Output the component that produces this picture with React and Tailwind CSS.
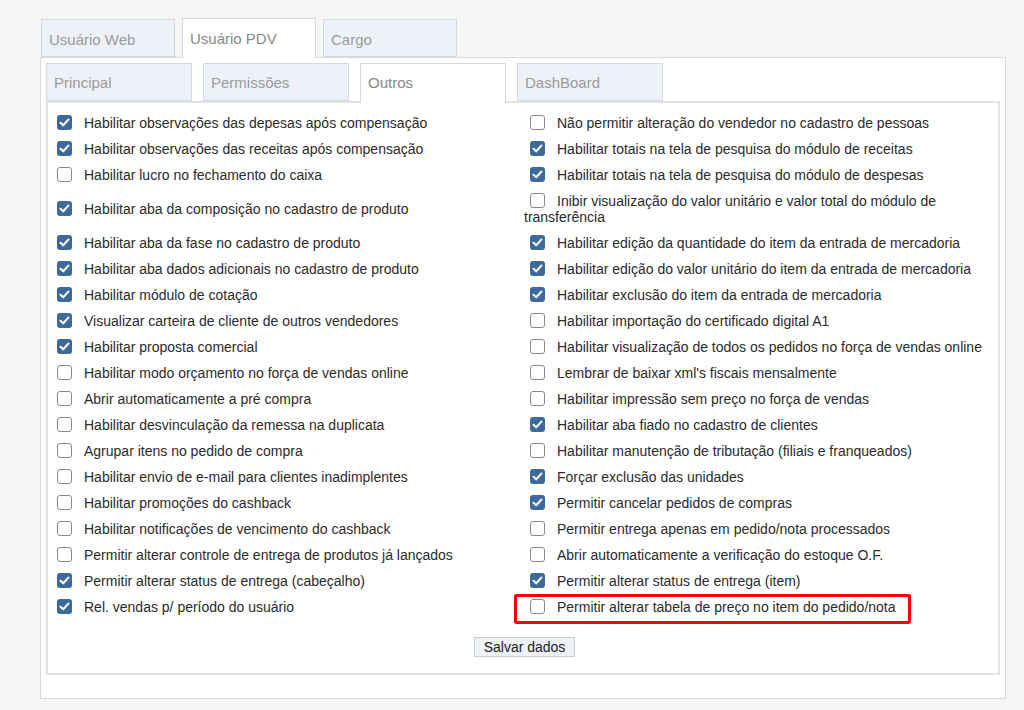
import React from "react";

const topTabs = ["Usuário Web", "Usuário PDV", "Cargo"];
const subTabs = ["Principal", "Permissões", "Outros", "DashBoard"];

const leftItems = [
  [true, "Habilitar observações das depesas após compensação"],
  [true, "Habilitar observações das receitas após compensação"],
  [false, "Habilitar lucro no fechamento do caixa"],
  [true, "Habilitar aba da composição no cadastro de produto"],
  [true, "Habilitar aba da fase no cadastro de produto"],
  [true, "Habilitar aba dados adicionais no cadastro de produto"],
  [true, "Habilitar módulo de cotação"],
  [true, "Visualizar carteira de cliente de outros vendedores"],
  [true, "Habilitar proposta comercial"],
  [false, "Habilitar modo orçamento no força de vendas online"],
  [false, "Abrir automaticamente a pré compra"],
  [false, "Habilitar desvinculação da remessa na duplicata"],
  [false, "Agrupar itens no pedido de compra"],
  [false, "Habilitar envio de e-mail para clientes inadimplentes"],
  [false, "Habilitar promoções do cashback"],
  [false, "Habilitar notificações de vencimento do cashback"],
  [false, "Permitir alterar controle de entrega de produtos já lançados"],
  [true, "Permitir alterar status de entrega (cabeçalho)"],
  [true, "Rel. vendas p/ período do usuário"],
];

const rightItems = [
  [false, "Não permitir alteração do vendedor no cadastro de pessoas"],
  [true, "Habilitar totais na tela de pesquisa do módulo de receitas"],
  [true, "Habilitar totais na tela de pesquisa do módulo de despesas"],
  [false, "Inibir visualização do valor unitário e valor total do módulo de transferência"],
  [true, "Habilitar edição da quantidade do item da entrada de mercadoria"],
  [true, "Habilitar edição do valor unitário do item da entrada de mercadoria"],
  [true, "Habilitar exclusão do item da entrada de mercadoria"],
  [false, "Habilitar importação do certificado digital A1"],
  [false, "Habilitar visualização de todos os pedidos no força de vendas online"],
  [false, "Lembrar de baixar xml's fiscais mensalmente"],
  [false, "Habilitar impressão sem preço no força de vendas"],
  [true, "Habilitar aba fiado no cadastro de clientes"],
  [false, "Habilitar manutenção de tributação (filiais e franqueados)"],
  [true, "Forçar exclusão das unidades"],
  [true, "Permitir cancelar pedidos de compras"],
  [false, "Permitir entrega apenas em pedido/nota processados"],
  [false, "Abrir automaticamente a verificação do estoque O.F."],
  [true, "Permitir alterar status de entrega (item)"],
  [false, "Permitir alterar tabela de preço no item do pedido/nota"],
];

const Box = ({ on }) =>
  on ? (
    <span className="inline-flex items-center justify-center w-[15px] h-[15px] rounded-[3px] bg-[#3d6a9c] align-[-2px] ml-[6px] mr-[12px]">
      <svg viewBox="0 0 15 15" className="w-[15px] h-[15px]">
        <path d="M3.5 7.8 L6.2 10.3 L11.4 4.6" stroke="white" strokeWidth="2.1" fill="none" strokeLinecap="round" strokeLinejoin="round" />
      </svg>
    </span>
  ) : (
    <span className="inline-block w-[15px] h-[15px] rounded-[3px] border-[1.5px] border-[#8a8a8a] bg-white align-[-2px] ml-[6px] mr-[12px]" />
  );

const Cell = ({ item, marked }) => (
  <div className="relative py-[5px] leading-4">
    {marked && (
      <span className="absolute left-[-10px] top-0 w-[397px] h-[30px] border-[3px] border-[#ff0000] rounded-[2px]" />
    )}
    <Box on={item[0]} />
    {item[1]}
  </div>
);

const Tab = ({ label, active, wide }) => (
  <div
    className={
      (wide ? "w-[146px] pt-[10px] " : "w-[134px] pt-[11px] ") +
      (active
        ? "bg-white h-[40px] border border-b-0 border-[#d4d9e0] text-[#888] relative z-10 " + (wide ? "-mb-[2px]" : "-mb-px")
        : "bg-[#eef2f8] h-[38px] border border-[#d4d9e0] text-[#9a9a9a]") +
      " px-[7px] text-[15px] leading-[18px]"
    }
  >
    {label}
  </div>
);

const App = () => {
  return (
    <div className="w-[1024px] h-[710px] bg-[#f6f6f6] pt-[18px] text-[#2b2b2b] text-[14px] font-['Liberation_Sans',Arial,sans-serif] overflow-hidden">
      <div className="ml-[40px] w-[966px]">
        <nav className="flex items-end gap-[7px] pl-[1px]">
          {topTabs.map((t) => (
            <Tab key={t} label={t} active={t === "Usuário PDV"} />
          ))}
        </nav>

        <section className="bg-white border border-[#dadada] px-[5px] pt-[5px] pb-[23px]">
          <nav className="flex items-end gap-[11px]">
            {subTabs.map((t) => (
              <Tab key={t} label={t} wide active={t === "Outros"} />
            ))}
          </nav>

          <main className="border-2 border-[#e2e2e2] bg-white pl-[3px] pt-[7px] pb-[16px]">
            <div className="grid grid-cols-[473px_472px] items-center">
              {leftItems.map((item, i) => (
                <React.Fragment key={i}>
                  <Cell item={item} />
                  <Cell item={rightItems[i]} marked={i === 18} />
                </React.Fragment>
              ))}
            </div>
            <div className="flex justify-center mt-[17px]">
              <button className="h-[20px] px-[9px] bg-[#eef1f5] border border-[#c9ced5] text-[#222] text-[14px] leading-[18px]">
                Salvar dados
              </button>
            </div>
          </main>
        </section>
      </div>
    </div>
  );
};

export default App;
